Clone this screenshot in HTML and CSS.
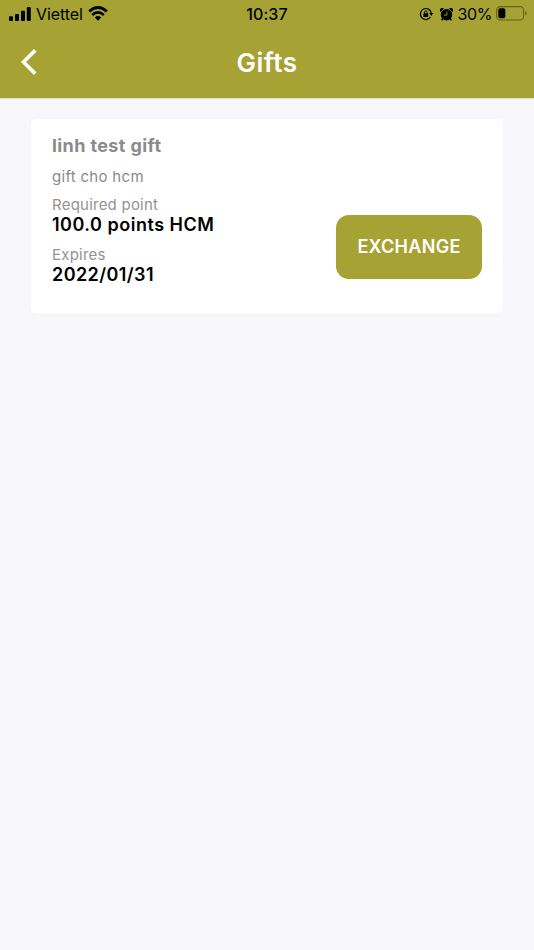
FILE: index.html
```html
<!DOCTYPE html>
<html lang="en">
<head>
<meta charset="utf-8">
<title>Gifts</title>
<link rel="stylesheet" href="styles.css">
</head>
<body>
<header class="header">
  <div class="status">
    <div class="status-left">
      <svg class="signal" width="23" height="14" viewBox="0 0 23 14"><rect x="0" y="9.2" width="4" height="4.8" rx="1"/><rect x="6" y="7" width="4" height="7" rx="1"/><rect x="12" y="3.8" width="4" height="10.2" rx="1"/><rect x="17.8" y="0" width="4" height="14" rx="1"/></svg>
      <span class="carrier">Viettel</span>
      <svg class="wifi" width="20" height="15" viewBox="0 0 20 15"><path d="M1.2 5.4Q10-2.4 18.8 5.4" fill="none" stroke="#000" stroke-width="2.8"/><path d="M4.2 8.9Q10 3.8 15.8 8.9" fill="none" stroke="#000" stroke-width="2.6"/><path d="M6.8 11.5Q10 8.7 13.2 11.5L10 14.7Z"/></svg>
    </div>
    <span class="time">10:37</span>
    <div class="status-right">
      <svg class="lock" width="15" height="14" viewBox="0 0 15 14"><path d="M11.4 10.2A5.5 5.5 0 1 1 12.3 6" fill="none" stroke="#000" stroke-width="1.2"/><path d="M10.3 6H14.3L12.3 9Z"/><rect x="4.4" y="6.3" width="4.8" height="3.6" rx=".5"/><path d="M5.5 6.5V5.2A1.3 1.3 0 0 1 8.1 5.2V6.5" fill="none" stroke="#000" stroke-width=".9"/></svg>
      <svg class="alarm" width="13" height="13" viewBox="0 0 13 13"><circle cx="6.5" cy="6.7" r="5.7"/><path d="M.6 4A2 2 0 0 1 4 .6ZM12.4 4A2 2 0 0 0 9 .6Z"/><path d="M3 10.5L1.6 12.2M10 10.5L11.4 12.2" stroke="#000" stroke-width="1.6"/><path d="M6.9 3.7V7.1H4" fill="none" stroke="#a6a233" stroke-width=".9"/></svg>
      <span class="percent">30%</span>
      <svg class="battery" width="31" height="15" viewBox="0 0 31 15"><rect x=".6" y=".6" width="27" height="13.4" rx="3.6" fill="none" stroke="#666323" stroke-width="1.1"/><rect x="2.3" y="2.3" width="7" height="10" rx="1.8"/><path d="M29.2 5V9.6Q30.6 9 30.6 7.3T29.2 5Z" fill="#666323"/></svg>
    </div>
  </div>
  <nav class="nav">
    <svg class="back" width="16" height="26" viewBox="0 0 16 26"><path d="M14.2 1.4L2.5 13L14.2 24.6" fill="none" stroke="#fff" stroke-width="3.6"/></svg>
    <h1 class="title">Gifts</h1>
  </nav>
</header>
<main class="content">
  <article class="card">
    <div class="details">
      <h2 class="name">linh test gift</h2>
      <p class="description">gift cho hcm</p>
      <p class="label">Required point</p>
      <p class="value points">100.0 points HCM</p>
      <p class="label expires">Expires</p>
      <p class="value date">2022/01/31</p>
    </div>
    <button class="exchange" type="button">EXCHANGE</button>
  </article>
</main>
</body>
</html>
```
FILE: styles.css
```css
* { box-sizing: border-box; }
body { margin: 0; min-height: 950px; background: #f7f7fc; font-family: Inter, "Liberation Sans", sans-serif; color: #000; }
h1, h2, p { margin: 0; }
svg { display: block; flex: none; }
.header { height: 98px; background: #a6a233; box-shadow: 0 1px 1px rgba(166, 162, 51, .25); }
.status { height: 28px; display: grid; grid-template-columns: 1fr auto 1fr; align-items: center; padding: 0 7px 0 9px; font-size: 16px; line-height: 20px; }
.status-left, .status-right { display: flex; align-items: center; height: 26px; }
.status-right { justify-content: flex-end; }
.signal { margin-right: 4px; margin-top: -1px; }
.carrier { letter-spacing: -.1px; }
.wifi { margin-left: 5px; margin-top: -1px; }
.time { font-weight: 500; letter-spacing: .1px; margin-right: 2px; }
.lock { margin-right: 6px; }
.alarm { margin-right: 5px; }
.percent { letter-spacing: -.4px; }
.battery { margin-left: 4px; margin-top: -1px; }
.nav { height: 68px; display: grid; grid-template-columns: 60px 1fr 60px; align-items: center; }
.back { margin-left: 21px; }
.title { padding-top: 1px; text-align: center; color: #fff; font-size: 26px; line-height: 32px; font-weight: 600; letter-spacing: .5px; }
.content { padding: 21px 31px; }
.card { height: 195px; padding: 15px 21px 0; display: flex; justify-content: space-between; align-items: flex-start; background: #fff; border-radius: 5px; box-shadow: 0 1px 2px rgba(80, 80, 120, .04); }
.name { color: #8b8b8b; font-size: 18px; line-height: 24px; font-weight: 700; letter-spacing: .4px; }
.description { margin-top: 9px; color: #8b8b8b; font-size: 15px; line-height: 20px; letter-spacing: .3px; }
.label { margin-top: 8px; color: #939393; font-size: 15px; line-height: 20px; letter-spacing: .23px; }
.value { font-size: 18px; line-height: 20px; font-weight: 600; letter-spacing: .5px; }
.date { letter-spacing: .42px; }
.expires { margin-top: 10px; }
.exchange { margin-top: 81px; width: 146px; height: 64px; padding: 0 0 1px; border: 0; border-radius: 13px; background: #a6a233; color: #fff; font: 600 18px/22px Inter, "Liberation Sans", sans-serif; letter-spacing: .3px; }
```
